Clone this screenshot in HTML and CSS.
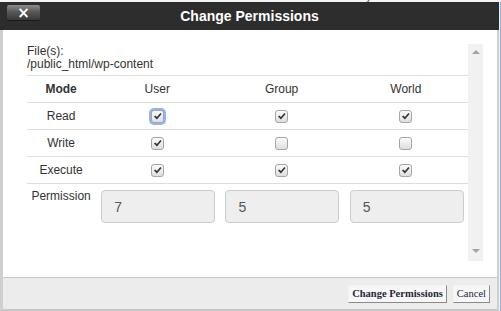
FILE: index.html
```html
<!DOCTYPE html>
<html lang="en">
<head>
  <meta charset="UTF-8">
  <title>Change Permissions</title>
  <link rel="stylesheet" href="styles.css">
</head>
<body>
  <!-- page behind the dialog, only its last pixels show -->
  <div class="backdrop">
    <span class="bg-name">File</span>
    <span class="bg-date">Yesterday 5:26 PM</span>
  </div>

  <div class="dialog">
    <div class="dialog-header">
      <div class="header-left">
        <button type="button" class="close-button">&times;</button>
      </div>
      <h2 class="dialog-title">Change Permissions</h2>
      <div></div>
    </div>

    <div class="dialog-body">
      <div class="scroll-box">
        <div class="scroll-content">
          <p class="files">File(s):<br>/public_html/wp-content</p>
          <table class="perm-table">
            <colgroup>
              <col class="col-mode">
              <col class="col-who">
              <col class="col-who">
              <col class="col-who">
            </colgroup>
            <tr>
              <th>Mode</th>
              <td>User</td>
              <td>Group</td>
              <td>World</td>
            </tr>
            <tr>
              <td>Read</td>
              <td><input type="checkbox" class="cb focused" checked></td>
              <td><input type="checkbox" class="cb" checked></td>
              <td><input type="checkbox" class="cb" checked></td>
            </tr>
            <tr>
              <td>Write</td>
              <td><input type="checkbox" class="cb" checked></td>
              <td><input type="checkbox" class="cb"></td>
              <td><input type="checkbox" class="cb"></td>
            </tr>
            <tr>
              <td>Execute</td>
              <td><input type="checkbox" class="cb" checked></td>
              <td><input type="checkbox" class="cb" checked></td>
              <td><input type="checkbox" class="cb" checked></td>
            </tr>
            <tr class="octal-row">
              <td>Permission</td>
              <td><input type="text" class="octal" value="7" readonly></td>
              <td><input type="text" class="octal" value="5" readonly></td>
              <td><input type="text" class="octal" value="5" readonly></td>
            </tr>
          </table>
        </div>
        <!-- empty scrollbar track, nothing to scroll -->
        <div class="scrollbar">
          <span class="arrow arrow-up"></span>
          <span class="arrow arrow-down"></span>
        </div>
      </div>
    </div>

    <div class="dialog-footer">
      <button type="button" class="footer-button primary">Change Permissions</button>
      <button type="button" class="footer-button">Cancel</button>
    </div>
  </div>
</body>
</html>
```

FILE: styles.css
```css
/* General */
body {
  margin: 0;
  font-family: "Liberation Sans", Arial, sans-serif;
  font-size: 12px;
  color: #333;
  background: linear-gradient(to right, #f4f4f4 500px, #8fb0e0 500px);
  height: 311px;
  overflow: hidden;
}

/* Page behind the dialog */
.backdrop {
  height: 2px;
  overflow: hidden;
  display: flex;
  background-color: #f4f4f4;
}

.backdrop span {
  margin-top: -12px;
  line-height: 14px;
  font-size: 14px;
  color: #666;
}

.bg-name {
  margin-left: 216px;
}

.bg-date {
  margin-left: 72px;
}

/* Dialog frame */
.dialog {
  width: 494px;
  border-left: 3px solid #cfcfcf;
  border-right: 2px solid #cfcfcf;
  border-bottom: 2px solid #c8c8c8;
  background-color: #ffffff;
}

.dialog-header {
  margin-left: -3px;
  margin-right: -2px;
  height: 28px;
  display: grid;
  grid-template-columns: 1fr auto 1fr;
  align-items: center;
  background-color: #2d2d2d;
}

.header-left {
  align-self: start;
  padding: 3px 0 0 7px;
}

.close-button {
  display: block;
  width: 33px;
  height: 15px;
  padding: 0;
  border: none;
  border-radius: 2px;
  background: linear-gradient(#8d8d8d, #5a5757 45%, #3a3838);
  box-shadow: 0 1px 0 #1a1a22;
  color: #ffffff;
  font-family: "DejaVu Sans", sans-serif;
  font-size: 15px;
  font-weight: bold;
  line-height: 14px;
}

.dialog-title {
  margin: 0;
  font-size: 14px;
  font-weight: bold;
  color: #ffffff;
  line-height: 28px;
}

/* Body with the scrolling content */
.dialog-body {
  padding: 14px 14px 16px 24px;
}

.scroll-box {
  height: 217px;
  display: flex;
}

.scroll-content {
  width: 441px;
}

.scrollbar {
  width: 15px;
  background-color: #f1f1f1;
  display: flex;
  flex-direction: column;
  justify-content: space-between;
  align-items: center;
  padding: 6px 0 8px;
  box-sizing: border-box;
}

.arrow {
  width: 0;
  height: 0;
  border-left: 4px solid transparent;
  border-right: 4px solid transparent;
}

.arrow-up {
  border-bottom: 4px solid #a3a3a3;
}

.arrow-down {
  border-top: 4px solid #a3a3a3;
}

.files {
  margin: 0;
  line-height: 13px;
  padding-top: 1px;
  padding-bottom: 4px;
}

.perm-table {
  width: 441px;
  border-collapse: collapse;
  table-layout: fixed;
}

.col-mode {
  width: 68px;
}

.col-who {
  width: 124px;
}

.perm-table th,
.perm-table td {
  height: 26px;
  padding: 0;
  border-top: 1px solid #dddddd;
  text-align: center;
  vertical-align: middle;
  font-weight: normal;
}

.perm-table th {
  font-weight: bold;
}

.octal-row td {
  vertical-align: top;
  padding-top: 6px;
  line-height: 14px;
}

.octal-row td:first-child {
  padding-top: 5px;
}

.octal-row td + td {
  text-align: left;
  padding-left: 6px;
}

/* Checkboxes drawn in the old grey style */
.cb {
  appearance: none;
  display: block;
  margin: 0 auto;
  width: 13px;
  height: 13px;
  border: 1px solid #a6a6a6;
  border-radius: 3px;
  background-color: #e9e9e9;
  background-image: linear-gradient(#fbfbfb, #dedede);
  box-sizing: border-box;
}

.cb:checked {
  background-image: url("data:image/svg+xml;charset=UTF-8,%3Csvg xmlns='http://www.w3.org/2000/svg' viewBox='0 0 11 11'%3E%3Cpath fill='%23333' d='M2 5.6l1.3-1.2 1.6 1.7L8.4 2l1.2 1.1-4.7 5.4z'/%3E%3C/svg%3E"), linear-gradient(#fbfbfb, #dedede);
  background-size: 11px 11px, 100% 100%;
  background-repeat: no-repeat;
}

.cb.focused {
  box-shadow: 0 0 0 2px #8fb4f4;
}

/* Octal value boxes */
.octal {
  display: block;
  width: 114px;
  height: 33px;
  box-sizing: border-box;
  padding: 0 12px;
  border: 1px solid #cccccc;
  border-radius: 4px;
  background-color: #eeeeee;
  color: #555;
  font-family: inherit;
  font-size: 14px;
  outline: none;
}

/* Footer */
.dialog-footer {
  height: 31px;
  border-top: 1px solid #c8c8c8;
  background-color: #ececec;
  display: flex;
  justify-content: flex-end;
  align-items: center;
  gap: 6px;
  padding-right: 7px;
}

.footer-button {
  height: 18px;
  padding: 0 3px;
  border: 1px solid;
  border-color: #f2f2f2 #8a8a8a #8a8a8a #f2f2f2;
  background-color: #f7f7f7;
  color: #26263a;
  font-family: "Liberation Serif", "Times New Roman", serif;
  font-size: 10.5px;
  line-height: 16px;
}

.footer-button.primary {
  font-weight: bold;
}
```
